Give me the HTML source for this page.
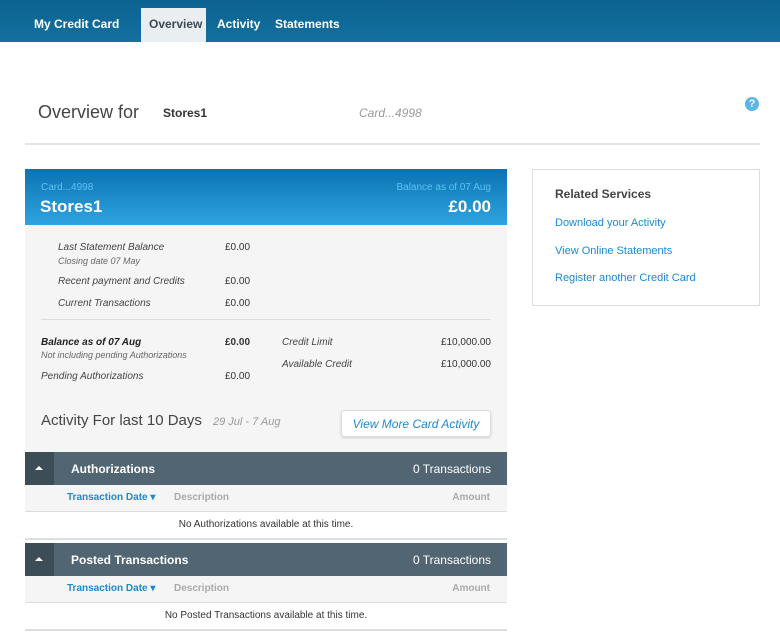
<!DOCTYPE html>
<html><head><style>
*{margin:0;padding:0;box-sizing:border-box}
body{width:780px;height:632px;background:#fff;font-family:"Liberation Sans",sans-serif;position:relative;overflow:hidden;color:#333}
.a{position:absolute;white-space:nowrap}
.nav{position:absolute;left:0;top:0;width:780px;height:42px;background:linear-gradient(#0c6391,#12709f)}
.nt{position:absolute;top:17px;color:#fff;font-weight:bold;font-size:12px}
.i{font-style:italic;font-size:10px;color:#444}
.v{font-size:10px;color:#333}
.bar{position:absolute;left:25px;width:482px;height:33px;background:#526572}
.sq{position:absolute;left:0;top:0;width:29px;height:33px;background:#3d4d58}
.sq:after{content:"";position:absolute;left:10px;top:14px;border-left:4px solid transparent;border-right:4px solid transparent;border-bottom:4px solid #fff}
.bt{position:absolute;left:46px;top:10px;color:#fff;font-weight:bold;font-size:12px}
.bc{position:absolute;right:16px;top:10px;color:#fff;font-size:12px}
.hr{position:absolute;left:25px;width:482px;height:27px;background:#f5f5f5;border-bottom:1px solid #ddd;font-size:10px;font-weight:bold}
.msg{position:absolute;left:25px;width:482px;height:28px;background:#fff;border-bottom:2px solid #ddd;text-align:center;font-size:10px;line-height:26px}
</style></head><body>
<div class="nav">
<div class="nt" style="left:34px">My Credit Card</div>
<div class="a" style="left:141px;top:8px;width:65px;height:34px;background:#e9eef1"></div>
<div class="nt" style="left:149px;color:#3b4a55">Overview</div>
<div class="nt" style="left:217px">Activity</div>
<div class="nt" style="left:275px">Statements</div>
</div>
<div class="a" style="left:38px;top:102px;font-size:18px;color:#444">Overview for</div>
<div class="a" style="left:163px;top:106px;font-size:12px;font-weight:bold;color:#333">Stores1</div>
<div class="a" style="left:359px;top:106px;font-size:12px;font-style:italic;color:#999">Card...4998</div>
<div class="a" style="left:745px;top:97px;width:14px;height:14px;border-radius:50%;background:#5bb5e6;color:#fff;font-size:11px;font-weight:bold;text-align:center;line-height:14px">?</div>
<div class="a" style="left:25px;top:143px;width:735px;height:2px;background:#e4e4e4"></div>

<div class="a" style="left:25px;top:169px;width:482px;height:56px;background:linear-gradient(#0b73b2,#2fa4e0)"></div>
<div class="a" style="left:41px;top:182px;font-size:10px;color:#5fc0f0">Card...4998</div>
<div class="a" style="left:40px;top:197px;font-size:17px;font-weight:bold;color:#fff">Stores1</div>
<div class="a" style="right:289px;top:182px;font-size:10px;color:#5fc0f0">Balance as of 07 Aug</div>
<div class="a" style="right:289px;top:197px;font-size:17px;font-weight:bold;color:#fff">£0.00</div>

<div class="a" style="left:25px;top:225px;width:482px;height:227px;background:#f5f5f5"></div>
<div class="a i" style="left:58px;top:242px">Last Statement Balance</div>
<div class="a i" style="left:58px;top:256px;font-size:9px;color:#666">Closing date 07 May</div>
<div class="a v" style="left:225px;top:242px">£0.00</div>
<div class="a i" style="left:58px;top:276px">Recent payment and Credits</div>
<div class="a v" style="left:225px;top:276px">£0.00</div>
<div class="a i" style="left:58px;top:298px">Current Transactions</div>
<div class="a v" style="left:225px;top:298px">£0.00</div>
<div class="a" style="left:41px;top:319px;width:450px;height:1px;background:#ddd"></div>
<div class="a i" style="left:41px;top:337px;font-weight:bold;color:#222">Balance as of 07 Aug</div>
<div class="a i" style="left:41px;top:350px;font-size:9px;color:#666">Not including pending Authorizations</div>
<div class="a v" style="left:225px;top:337px;font-weight:bold">£0.00</div>
<div class="a i" style="left:41px;top:371px">Pending Authorizations</div>
<div class="a v" style="left:225px;top:371px">£0.00</div>
<div class="a i" style="left:282px;top:337px">Credit Limit</div>
<div class="a v" style="right:289px;top:337px">£10,000.00</div>
<div class="a i" style="left:282px;top:359px">Available Credit</div>
<div class="a v" style="right:289px;top:359px">£10,000.00</div>
<div class="a" style="left:41px;top:412px;font-size:15px;color:#444">Activity For last 10 Days</div>
<div class="a" style="left:213px;top:416px;font-size:11px;font-style:italic;color:#999">29 Jul - 7 Aug</div>
<div class="a" style="left:341px;top:410px;width:150px;height:27px;background:#fff;border:1px solid #ddd;border-radius:3px;box-shadow:0 1px 2px #ccc;color:#1a8ad0;font-style:italic;font-size:12px;text-align:center;line-height:26px">View More Card Activity</div>

<div class="bar" style="top:452px"><div class="sq"></div><div class="bt">Authorizations</div><div class="bc">0 Transactions</div></div>
<div class="hr" style="top:485px"><span class="a" style="left:42px;top:7px;color:#1a8ad0">Transaction Date ▾</span><span class="a" style="left:149px;top:7px;color:#aaa">Description</span><span class="a" style="right:17px;top:7px;color:#aaa">Amount</span></div>
<div class="msg" style="top:512px">No Authorizations available at this time.</div>
<div class="bar" style="top:543px"><div class="sq"></div><div class="bt">Posted Transactions</div><div class="bc">0 Transactions</div></div>
<div class="hr" style="top:576px"><span class="a" style="left:42px;top:7px;color:#1a8ad0">Transaction Date ▾</span><span class="a" style="left:149px;top:7px;color:#aaa">Description</span><span class="a" style="right:17px;top:7px;color:#aaa">Amount</span></div>
<div class="msg" style="top:603px">No Posted Transactions available at this time.</div>

<div class="a" style="left:532px;top:169px;width:228px;height:137px;border:1px solid #ddd"></div>
<div class="a" style="left:555px;top:187px;font-size:12px;font-weight:bold;color:#444">Related Services</div>
<div class="a" style="left:555px;top:217px;font-size:11px;color:#1a8ad0">Download your Activity</div>
<div class="a" style="left:555px;top:245px;font-size:11px;color:#1a8ad0">View Online Statements</div>
<div class="a" style="left:555px;top:272px;font-size:11px;color:#1a8ad0">Register another Credit Card</div>
</body></html>
